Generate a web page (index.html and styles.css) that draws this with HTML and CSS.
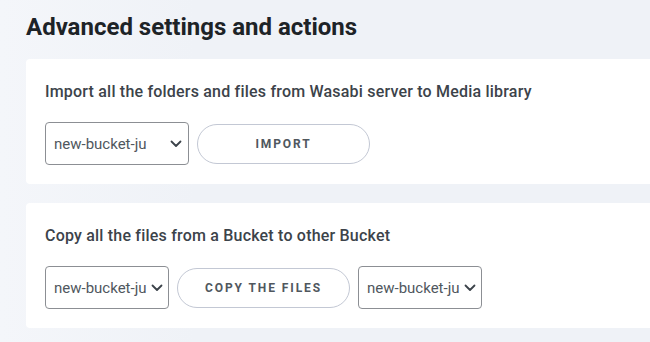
FILE: index.html
```html
<!DOCTYPE html>
<html lang="en">
<head>
  <meta charset="UTF-8">
  <title>Advanced settings and actions</title>
  <link rel="stylesheet" href="styles.css">
</head>
<body>
  <div class="page">
    <h1>Advanced settings and actions</h1>

    <div class="card">
      <p class="card-title">Import all the folders and files from Wasabi server to Media library</p>
      <div class="actions">
        <div class="select select-wide">
          <span>new-bucket-ju</span>
          <svg class="chevron" viewBox="0 0 12 8" width="12" height="8"><path d="M1.5 1.5 6 6l4.5-4.5" fill="none" stroke="#3c434a" stroke-width="1.8" stroke-linecap="round" stroke-linejoin="round"/></svg>
        </div>
        <button class="btn">Import</button>
      </div>
    </div>

    <div class="card">
      <p class="card-title">Copy all the files from a Bucket to other Bucket</p>
      <div class="actions">
        <div class="select">
          <span>new-bucket-ju</span>
          <svg class="chevron" viewBox="0 0 12 8" width="12" height="8"><path d="M1.5 1.5 6 6l4.5-4.5" fill="none" stroke="#3c434a" stroke-width="1.8" stroke-linecap="round" stroke-linejoin="round"/></svg>
        </div>
        <button class="btn">Copy the files</button>
        <div class="select">
          <span>new-bucket-ju</span>
          <svg class="chevron" viewBox="0 0 12 8" width="12" height="8"><path d="M1.5 1.5 6 6l4.5-4.5" fill="none" stroke="#3c434a" stroke-width="1.8" stroke-linecap="round" stroke-linejoin="round"/></svg>
        </div>
      </div>
    </div>
  </div>
</body>
</html>
```

FILE: styles.css
```css
body {
  margin: 0;
  font-family: Roboto, 'Liberation Sans', sans-serif;
  background: linear-gradient(90deg, #f4f6fa 0%, #eff2f7 30%, #eff2f7 100%);
  color: #1d2327;
  overflow: hidden;
}

.page {
  padding: 13px 0 0 26px;
  margin-right: -10px;
}

h1 {
  margin: 0 0 18px;
  font-size: 24px;
  font-weight: 700;
  line-height: 28px;
  color: #1d2327;
}

.card {
  background: #fff;
  border-radius: 4px;
  padding: 23px 19px 19px;
  margin-bottom: 19px;
}

.card-title {
  margin: 0 0 20px;
  font-size: 16px;
  font-weight: 500;
  line-height: 20px;
  letter-spacing: 0.2px;
  color: #3c434a;
}

.actions {
  display: flex;
  align-items: center;
  gap: 8px;
}

.select {
  box-sizing: border-box;
  display: flex;
  align-items: center;
  justify-content: space-between;
  width: 124px;
  height: 43px;
  padding: 0 7px 0 8px;
  border: 1px solid #8c8f94;
  border-radius: 4px;
  font-size: 15px;
  color: #50575e;
  white-space: nowrap;
  overflow: hidden;
}

.select-wide {
  width: 144px;
  padding-right: 6px;
}

.chevron {
  flex: none;
  margin-left: 4px;
}

.btn {
  box-sizing: border-box;
  width: 173px;
  height: 40px;
  border: 1px solid #c3c8d4;
  border-radius: 20px;
  background: #fff;
  font-family: inherit;
  font-size: 12px;
  font-weight: 700;
  letter-spacing: 1.9px;
  text-transform: uppercase;
  color: #50575e;
}
```
